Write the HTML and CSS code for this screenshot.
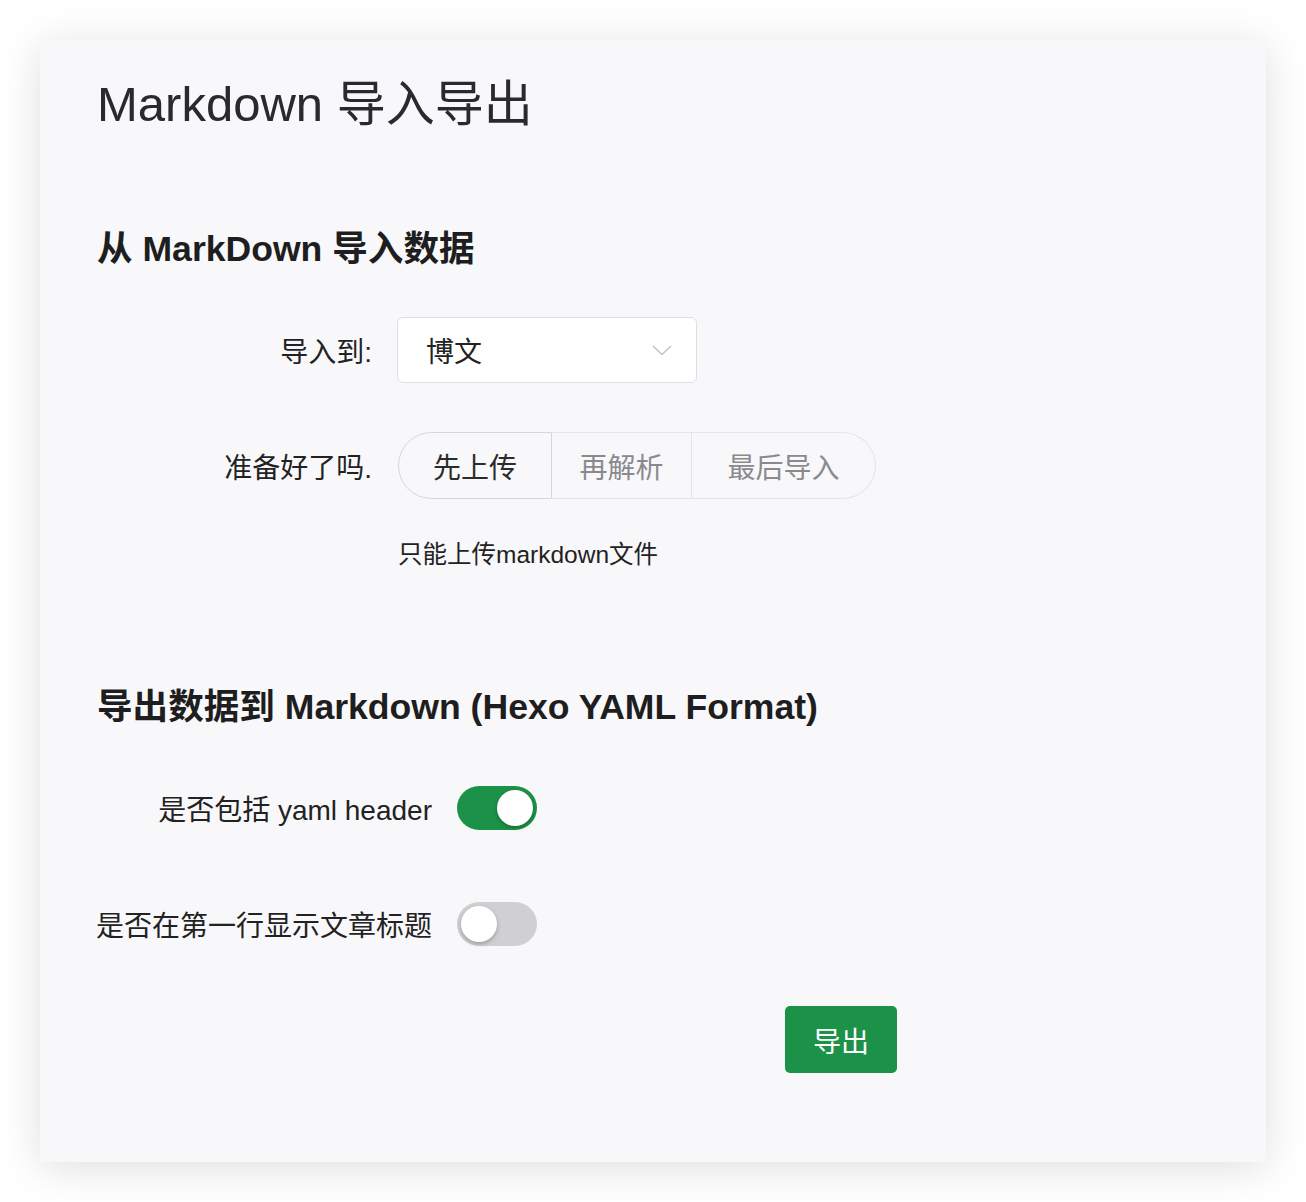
FILE: index.html
```html
<!DOCTYPE html>
<html lang="zh-CN">
<head>
<meta charset="utf-8">
<title>Markdown 导入导出</title>
<link rel="stylesheet" href="styles.css">
</head>
<body>
<main class="card">
  <h1 class="title">Markdown 导入导出</h1>

  <h2 class="section section-import">从 MarkDown 导入数据</h2>
  <div class="form form-import">
    <div class="row row-select">
      <label class="label">导入到:</label>
      <div class="select">
        <span class="select-value">博文</span>
        <svg class="chevron" width="20" height="11" viewBox="0 0 20 11"><path d="M1 1 L10 9.5 L19 1" fill="none" stroke="#c0c4cc" stroke-width="1.6"/></svg>
      </div>
    </div>
    <div class="row row-steps">
      <label class="label">准备好了吗.</label>
      <div class="steps">
        <span class="step step-first active">先上传</span>
        <span class="step step-mid">再解析</span>
        <span class="step step-last">最后导入</span>
      </div>
    </div>
    <p class="hint">只能上传markdown文件</p>
  </div>

  <h2 class="section section-export">导出数据到 Markdown (Hexo YAML Format)</h2>
  <div class="form form-export">
    <div class="row row-toggle">
      <label class="label">是否包括 yaml header</label>
      <span class="switch on"><span class="knob"></span></span>
    </div>
    <div class="row row-toggle row-toggle-2">
      <label class="label">是否在第一行显示文章标题</label>
      <span class="switch"><span class="knob"></span></span>
    </div>
    <div class="actions">
      <button class="btn">导出</button>
    </div>
  </div>
</main>
</body>
</html>
```

FILE: styles.css
```css
* { box-sizing: border-box; }

html, body {
  margin: 0;
  padding: 0;
  background: #ffffff;
}

body {
  padding: 40px;
  font-family: "Liberation Sans", "Noto Sans CJK SC", sans-serif;
  color: #222;
}

.card {
  width: 1226px;
  height: 1122px;
  background: #f8f8fa;
  box-shadow: 0 6px 40px rgba(0, 0, 0, 0.13);
  padding: 34px 57px 0 57px;
}

.title {
  margin: 0;
  font-size: 49px;
  line-height: 60px;
  font-weight: 400;
  color: #2a2a2c;
}

.section {
  margin: 0;
  font-size: 35.6px;
  line-height: 50px;
  font-weight: 700;
  color: #1e1e20;
}

.section-import { margin-top: 90px; }
.section-export { margin-top: 110px; }

.form { display: flex; flex-direction: column; }

.form-import { margin-top: 43px; }

.row {
  display: flex;
  align-items: center;
}

.label {
  display: flex;
  justify-content: flex-end;
  white-space: nowrap;
  font-size: 28px;
  color: #222;
  padding-right: 25px;
  flex: none;
}

.form-import .label { width: 300px; }
.form-export .label { width: 360px; }

.select {
  width: 300px;
  height: 66px;
  background: #fff;
  border: 1px solid #dcdfe6;
  border-radius: 6px;
  display: flex;
  align-items: center;
  justify-content: space-between;
  padding: 0 24px 0 28px;
}

.select-value {
  font-size: 28px;
  color: #222;
}

.row-steps { margin-top: 49px; }

.steps {
  display: flex;
  height: 67px;
  margin-left: 1px;
}

.step {
  display: flex;
  align-items: center;
  justify-content: center;
  font-size: 28px;
  color: #8a8a8e;
  border: 1.5px solid #e4e4ea;
  height: 67px;
}

.step-first {
  width: 154px;
  border-radius: 34px 0 0 34px;
  border-color: #d6d6dd;
  color: #2b2b2b;
}

.step-mid {
  width: 140px;
  border-left: none;
}

.step-last {
  width: 184px;
  border-left: none;
  border-radius: 0 34px 34px 0;
}

.hint {
  margin: 39px 0 0 301px;
  font-size: 24.5px;
  line-height: 34px;
  color: #222;
}

.form-export { margin-top: 54px; }

.row-toggle-2 { margin-top: 72px; }

.switch {
  position: relative;
  width: 80px;
  height: 44px;
  border-radius: 22px;
  background: #d0d0d2;
  flex: none;
}

.switch.on { background: #1c9248; }

.knob {
  position: absolute;
  top: 4px;
  left: 4px;
  width: 36px;
  height: 36px;
  border-radius: 50%;
  background: #fff;
  box-shadow: 0 2px 4px rgba(0, 0, 0, 0.25);
}

.switch.on .knob { left: 40px; }

.actions {
  margin-top: 60px;
  padding-left: 688px;
}

.btn {
  width: 112px;
  height: 67px;
  background: #1c9248;
  color: #fff;
  border: none;
  border-radius: 5px;
  font-family: "Liberation Sans", "Noto Sans CJK SC", sans-serif;
  font-size: 28px;
  padding: 0;
}
```
